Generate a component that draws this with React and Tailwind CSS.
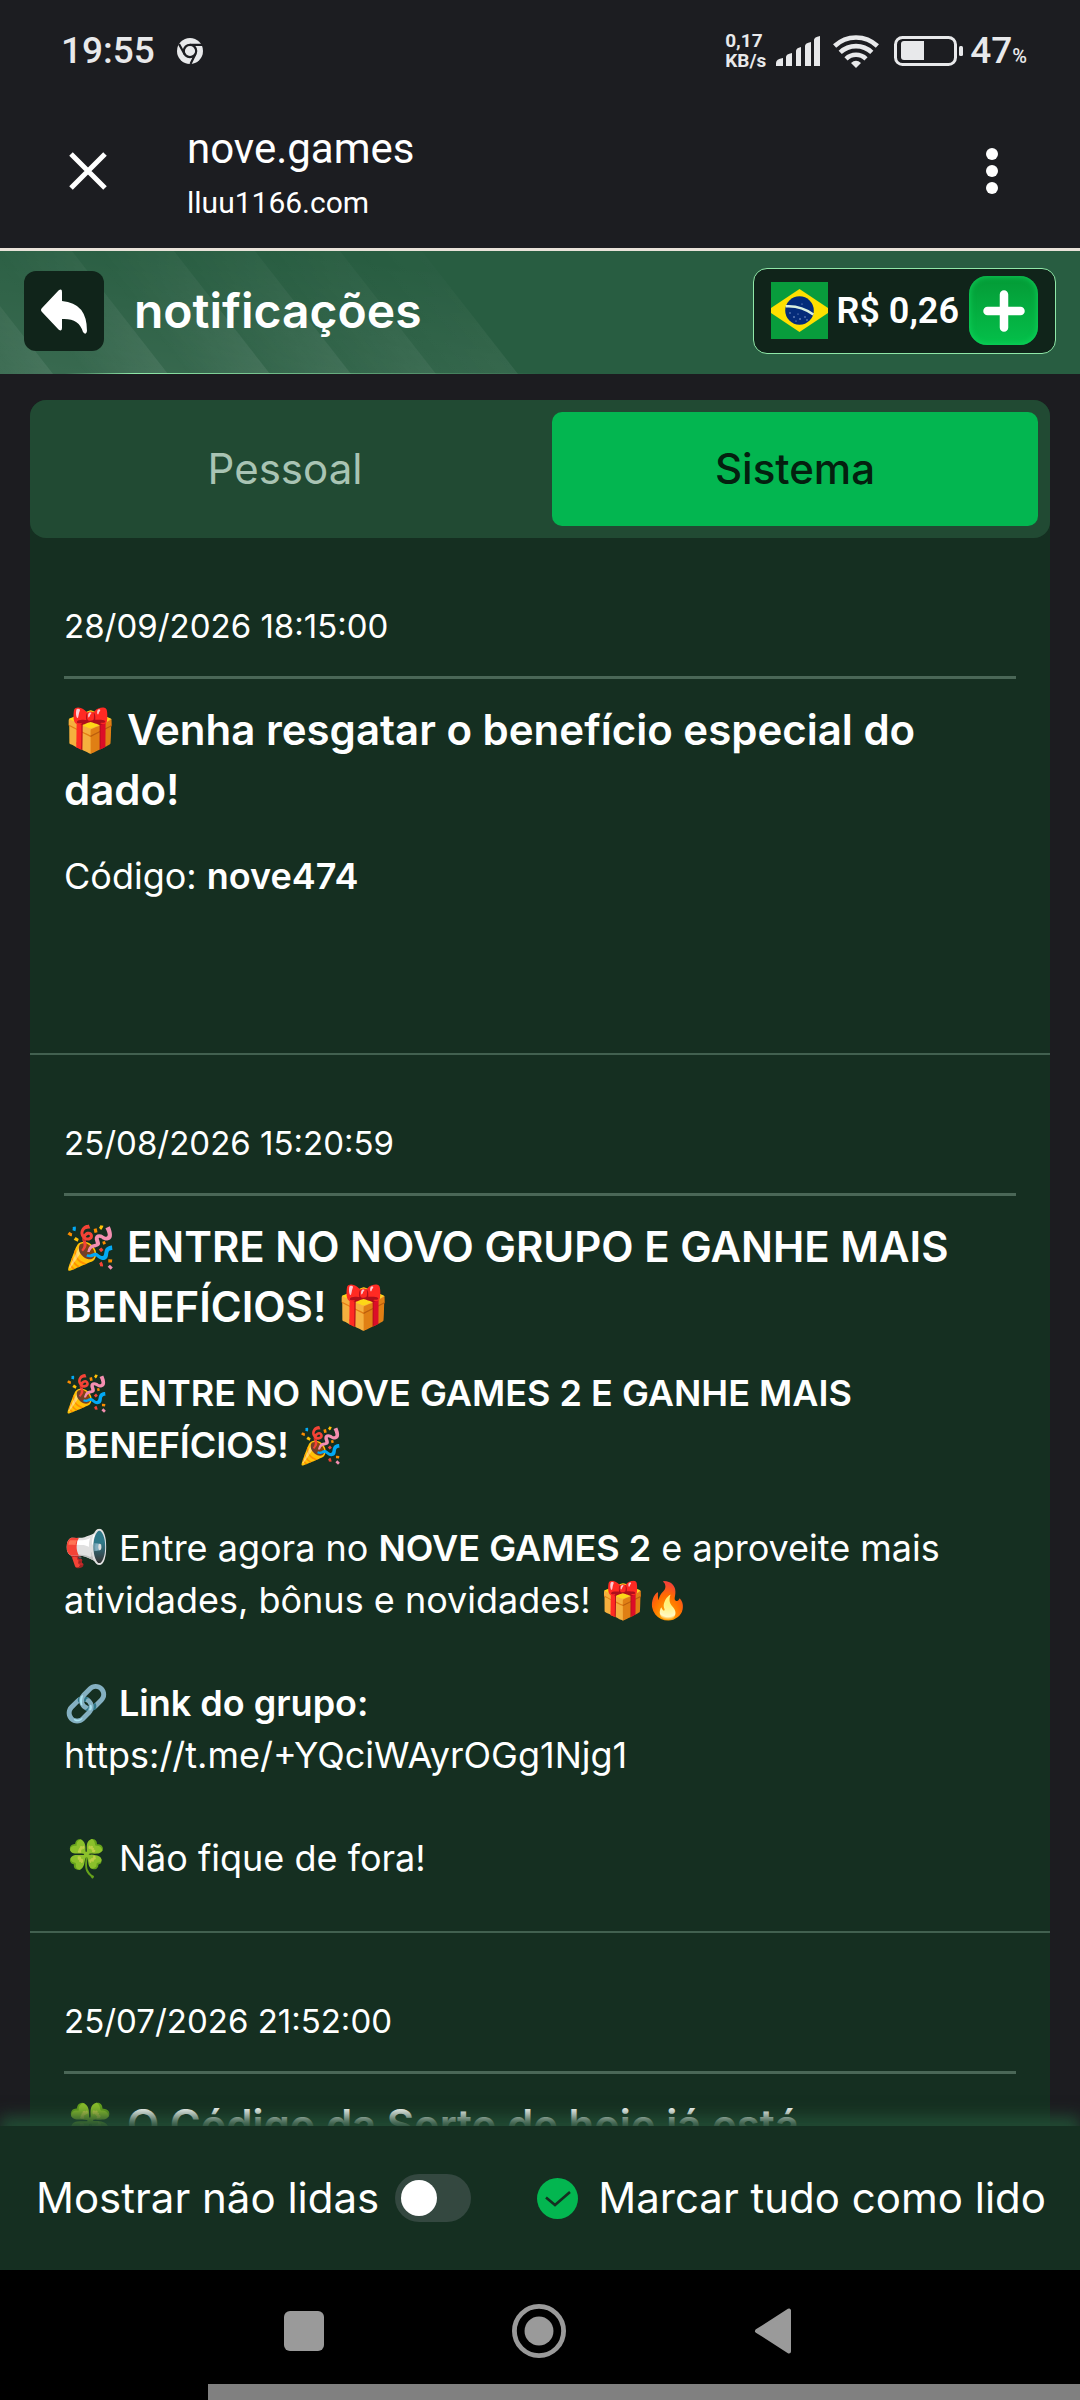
import { useState } from "react";

function ChromeIcon() {
  return (
    <svg viewBox="0 0 26 26" className="size-[26px]" aria-hidden="true">
      <circle cx="13" cy="13" r="13" fill="#e8e9eb" />
      <circle cx="13" cy="13" r="6.200" fill="none" stroke="#1c1d21" strokeWidth="2.200" />
      <path d="M13 6.800H25M7.600 16.200L2 6M18.400 16L13.500 26" stroke="#1c1d21" strokeWidth="2.200" fill="none" />
    </svg>
  );
}

function SignalIcon() {
  return (
    <svg viewBox="0 0 44 30" className="h-[30px] w-11" fill="#e8e9eb" aria-hidden="true">
      <path d="M0 30v-3q0-4 7-5v8zM10 30v-9q0-3 6-4v13zM20 30V15q0-3 5-4v19zM29 30V10q0-3 6-4v24zM38 30V4q0-3 6-4v30z" />
    </svg>
  );
}

function WifiIcon() {
  return (
    <svg viewBox="0 0 46 34" className="h-[34px] w-[46px]" fill="none" stroke="#e8e9eb" strokeWidth="4.600" aria-hidden="true">
      <path d="M1.600 12a31 31 0 0 1 42.800 0M7.200 18.400a23 23 0 0 1 31.600 0M13 24.800a14.500 14.500 0 0 1 20 0" />
      <path d="M23 34l-5-5q5-4.600 10 0z" fill="#e8e9eb" stroke="none" />
    </svg>
  );
}

function BatteryIcon() {
  return (
    <svg viewBox="0 0 70 30" className="h-[30px] w-[70px]" aria-hidden="true">
      <rect x="1.500" y="1.500" width="60" height="27" rx="7" fill="none" stroke="#e8e9eb" strokeWidth="3" />
      <path d="M10 5h20v19H10q-3 0-3-3V8q0-3 3-3z" fill="#e8e9eb" />
      <rect x="65" y="10" width="4" height="10" rx="1.500" fill="#e8e9eb" />
    </svg>
  );
}

function StatusBar() {
  return (
    <div className="flex h-[101px] items-center justify-between pr-[53px] pl-[61px] font-[Roboto,sans-serif] font-medium text-[#e8e9eb]">
      <div className="flex items-center gap-[22px]">
        <span className="text-[37px] leading-10">19:55</span>
        <ChromeIcon />
      </div>
      <div className="flex items-center">
        <div className="mr-2.5 text-[19px] leading-5 font-bold">
          <div>0,17</div>
          <div>KB/s</div>
        </div>
        <SignalIcon />
        <div className="w-[13px]" />
        <WifiIcon />
        <div className="w-[15px]" />
        <BatteryIcon />
        <div className="ml-1.5 flex items-baseline text-[37px] leading-10">
          47<span className="text-[20px] leading-5">%</span>
        </div>
      </div>
    </div>
  );
}

function BrowserBar() {
  return (
    <div className="flex h-[147px] items-center pr-[72px] pb-2 pl-[69px] text-white">
      <button type="button" aria-label="Fechar">
        <svg viewBox="0 0 38 38" className="size-[38px]" stroke="currentColor" strokeWidth="5" aria-hidden="true">
          <path d="M2 2l34 34M36 2L2 36" />
        </svg>
      </button>
      <div className="ml-20 flex-1 pt-2.5 font-[Roboto,sans-serif]">
        <div className="text-[42px] leading-[54px]">nove.games</div>
        <div className="text-[30px] leading-[54px]">lluu1166.com</div>
      </div>
      <button type="button" aria-label="Mais opções">
        <svg viewBox="0 0 32 46" className="h-[46px] w-8" fill="currentColor" aria-hidden="true">
          <circle cx="16" cy="6" r="6" />
          <circle cx="16" cy="23" r="6" />
          <circle cx="16" cy="40" r="6" />
        </svg>
      </button>
    </div>
  );
}

const STRIPES = [
  { edge: -43, opacity: 1 },
  { edge: 72, opacity: 1 },
  { edge: 174, opacity: 1 },
  { edge: 255, opacity: 0.9 },
  { edge: 340, opacity: 0.7 },
  { edge: 422, opacity: 0.3 },
];

function HeaderStripes() {
  return (
    <svg viewBox="0 0 540 123" className="absolute top-0 left-0 h-full w-[540px]" preserveAspectRatio="none" aria-hidden="true">
      <defs>
        <linearGradient id="stripe" gradientUnits="userSpaceOnUse" x1="-4" y1="102" x2="48" y2="61">
          <stop offset="0" stopColor="#fff" stopOpacity="0" />
          <stop offset="1" stopColor="#fff" stopOpacity="0.08" />
        </linearGradient>
        <linearGradient id="fade" x1="0" y1="0" x2="0" y2="1">
          <stop offset="0" stopColor="#fff" stopOpacity="0.4" />
          <stop offset="1" stopColor="#fff" />
        </linearGradient>
        <linearGradient id="base" x1="0" y1="1" x2="0.6" y2="0">
          <stop offset="0" stopColor="#fff" stopOpacity="0.08" />
          <stop offset="1" stopColor="#fff" stopOpacity="0" />
        </linearGradient>
        <linearGradient id="glow" x1="0" x2="1">
          <stop offset="0.12" stopColor="#8fe8a8" stopOpacity="0" />
          <stop offset="0.25" stopColor="#8fe8a8" />
          <stop offset="1" stopColor="#8fe8a8" stopOpacity="0" />
        </linearGradient>
        <mask id="stripe-mask">
          <rect width="540" height="123" fill="url(#fade)" />
        </mask>
      </defs>
      <path d="M0 0H422L518 123H0z" fill="url(#base)" />
      <g mask="url(#stripe-mask)">
        {STRIPES.map(({ edge, opacity }) => (
          <path key={edge} d="M-90 0H0L96 123H6z" transform={`translate(${edge})`} fill="url(#stripe)" opacity={opacity} />
        ))}
      </g>
      <rect x="0" y="122" width="540" height="1" fill="url(#glow)" />
    </svg>
  );
}

function BrazilFlag() {
  return (
    <svg viewBox="0 0 57 57" className="size-[57px]" role="img" aria-label="Brasil">
      <rect width="57" height="57" fill="#089c3c" />
      <path d="M28.500 7L57 26v5L28.500 50 0 31v-5z" fill="#fee000" />
      <circle cx="28.500" cy="28.500" r="14.300" fill="#042b7a" />
      <path d="M14.800 24.300q15-1 27.500 8.200" fill="none" stroke="#d9efe0" strokeWidth="2.400" />
      <g fill="#9fb4e0">
        <circle cx="19" cy="31" r=".7" />
        <circle cx="23" cy="35" r=".8" />
        <circle cx="27" cy="32" r=".6" />
        <circle cx="29" cy="37" r=".8" />
        <circle cx="34" cy="35" r=".7" />
        <circle cx="25" cy="39" r=".6" />
        <circle cx="36" cy="38" r=".7" />
        <circle cx="31" cy="22" r=".6" />
      </g>
    </svg>
  );
}

function Header() {
  return (
    <header className="relative flex h-[126px] shrink-0 items-center justify-between border-t-[3px] border-[#e8e2d9] bg-[#285d41] px-6 pb-1 text-white">
      <HeaderStripes />
      <div className="relative flex items-center gap-[30px]">
        <button type="button" aria-label="Voltar" className="flex size-20 items-center justify-center rounded-xl bg-[#10241a]">
          <svg viewBox="0 0 46 46" className="size-[46px]" fill="#fff" aria-hidden="true">
            <path d="M1 20L17.500 2.500Q21 0 21 4V13Q46 15 46 43Q45 48 42 44Q38 30 21 31V40Q21 44 17.500 41.500L1 24Q-1 22 1 20z" />
          </svg>
        </button>
        <h1 className="text-[48px] leading-[60px] font-semibold">notificações</h1>
      </div>
      <div className="relative flex h-[86px] items-center rounded-[14px] border border-[#8fe8a8] bg-[#10241a] px-[17px]">
        <BrazilFlag />
        <span className="mr-2.5 ml-2 font-[Roboto,sans-serif] text-[36px] leading-10 font-semibold">R$ 0,26</span>
        <button
          type="button"
          aria-label="Depositar"
          className="flex size-[69px] items-center justify-center rounded-[18px] bg-linear-to-b from-[#049a36] to-[#04c04a] shadow-[inset_0_0_6px_#10d860]"
        >
          <svg viewBox="0 0 42 42" className="size-[42px]" stroke="#fff" strokeWidth="8.500" strokeLinecap="round" aria-hidden="true">
            <path d="M21 4.500v33M4.500 21h33" />
          </svg>
        </button>
      </div>
    </header>
  );
}

function Notification({ date, title, children }) {
  return (
    <article className="border-b-2 border-[#426150] px-[34px] pt-[62px] pb-[47px]">
      <time className="block border-b-[3px] border-[#4a6757] pb-6 text-[33px] leading-[52px]">{date}</time>
      <h2 className="mt-[21px] text-[42px] leading-[60px] font-semibold">{title}</h2>
      <div className="mt-[30px] flex flex-col gap-[51px] text-[36px] leading-[52px]">{children}</div>
    </article>
  );
}

function Footer() {
  const [unread, setUnread] = useState(false);
  return (
    <footer className="relative flex h-36 shrink-0 items-center justify-between bg-[#152f21] pr-[34px] pl-9 text-[42px] leading-[52px] text-white shadow-[0_-10px_14px_#214a33]">
      <label className="flex items-center gap-4">
        Mostrar não lidas
        <input
          type="checkbox"
          role="switch"
          checked={unread}
          onChange={(e) => setUnread(e.target.checked)}
          className="flex h-12 w-[76px] appearance-none items-center rounded-full bg-[#344840] px-1.5 before:size-9 before:rounded-full before:bg-white checked:justify-end checked:bg-[#03b650]"
        />
      </label>
      <button type="button" className="flex items-center gap-5">
        <svg viewBox="0 0 41 41" className="size-[41px]" aria-hidden="true">
          <circle cx="20.500" cy="20.500" r="20.500" fill="#03b650" />
          <path d="M9 19.500l9 7.500 15-13" fill="none" stroke="#152f21" strokeWidth="2.600" />
        </svg>
        Marcar tudo como lido
      </button>
    </footer>
  );
}

function SystemNav() {
  return (
    <nav className="relative shrink-0 bg-black text-[#9a9a9a]">
      <div className="flex h-[114px] items-center justify-center gap-[188px] pt-2 pr-1">
        <button type="button" aria-label="Recentes" className="size-10 rounded-md bg-[#9a9a9a]" />
        <button type="button" aria-label="Início">
          <svg viewBox="0 0 56 56" className="size-[54px]" aria-hidden="true">
            <circle cx="28" cy="28" r="25.500" fill="none" stroke="currentColor" strokeWidth="5" />
            <circle cx="28" cy="28" r="15" fill="currentColor" />
          </svg>
        </button>
        <button type="button" aria-label="Voltar ao app anterior">
          <svg viewBox="0 0 38 46" className="h-[46px] w-[38px]" fill="currentColor" stroke="currentColor" strokeWidth="4" strokeLinejoin="round" aria-hidden="true">
            <path d="M3 23L35 2.500v41z" />
          </svg>
        </button>
      </div>
      <div className="ml-52 h-4 bg-[#808080]" />
    </nav>
  );
}

export default function App() {
  const [tab, setTab] = useState("sistema");
  const idle = "flex-1 rounded-[10px] text-[#a9c4b4]";
  const active = "flex-1 rounded-[10px] bg-[#03b650] font-medium text-[#04200f]";
  return (
    <div className="flex h-screen flex-col overflow-hidden bg-[#1c1c20] font-[Inter,'Noto_Color_Emoji',sans-serif] text-white">
      <div className="shrink-0 bg-[#1c1d21]">
        <StatusBar />
        <BrowserBar />
      </div>
      <Header />
      <main className="mx-[30px] mt-[26px] flex min-h-0 flex-1 flex-col rounded-t-2xl bg-[#152f21]">
        <div role="tablist" className="flex h-[138px] shrink-0 gap-6 rounded-2xl bg-[#214a33] p-3 text-[42px] leading-[52px]">
          <button type="button" role="tab" aria-selected={tab === "pessoal"} onClick={() => setTab("pessoal")} className={tab === "pessoal" ? active : idle}>
            Pessoal
          </button>
          <button type="button" role="tab" aria-selected={tab === "sistema"} onClick={() => setTab("sistema")} className={tab === "sistema" ? active : idle}>
            Sistema
          </button>
        </div>
        <div className="min-h-0 flex-1 overflow-y-auto [scrollbar-width:none]">
          <Notification
            date="28/09/2026 18:15:00"
            title={
              <>
                🎁 Venha resgatar o benefício especial do
                <br />
                dado!
              </>
            }
          >
            <p className="min-h-[156px]">
              Código: <strong className="font-semibold">nove474</strong>
            </p>
          </Notification>
          <Notification date="25/08/2026 15:20:59" title="🎉 ENTRE NO NOVO GRUPO E GANHE MAIS BENEFÍCIOS! 🎁">
            <p className="font-semibold">
              🎉 ENTRE NO NOVE GAMES 2 E GANHE MAIS
              <br />
              BENEFÍCIOS! 🎉
            </p>
            <p>
              📢 Entre agora no <strong className="font-semibold">NOVE GAMES 2</strong> e aproveite mais
              <br />
              atividades, bônus e novidades! 🎁🔥
            </p>
            <p>
              🔗 <strong className="font-semibold">Link do grupo:</strong>
              <br />
              https://t.me/+YQciWAyrOGg1Njg1
            </p>
            <p>🍀 Não fique de fora!</p>
          </Notification>
          <Notification date="25/07/2026 21:52:00" title="🍀 O Código da Sorte de hoje já está" />
        </div>
      </main>
      <Footer />
      <SystemNav />
    </div>
  );
}
